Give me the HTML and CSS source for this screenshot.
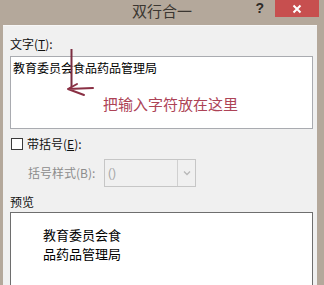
FILE: index.html
```html
<!DOCTYPE html>
<html lang="zh">
<head>
<meta charset="utf-8">
<link rel="stylesheet" href="styles.css">
</head>
<body>
<div class="window">
  <div class="titlebar">
    <span class="spacer"></span>
    <span class="title">双行合一</span>
    <div class="controls">
      <span class="help">?</span>
      <span class="close">
        <svg width="10" height="10" viewBox="0 0 10 10"><path d="M1.5 1.5 L8.5 8.5 M8.5 1.5 L1.5 8.5" stroke="#fff" stroke-width="2" fill="none"/></svg>
      </span>
    </div>
  </div>
  <div class="panel">
    <div class="label">文字(<u>T</u>):</div>
    <div class="textbox">
      <span class="content">教育委员会食品药品管理局</span>
      <svg class="arrow" width="40" height="50" viewBox="0 0 40 50">
        <path d="M10.5 0 L10.5 38" stroke="#7b2d40" stroke-width="2" fill="none"/>
        <path d="M16 35 L7 40 L23 46 M7 40 L32 39" stroke="#8a3044" stroke-width="2" fill="none" stroke-linecap="round" stroke-linejoin="round"/>
      </svg>
      <span class="note">把输入字符放在这里</span>
    </div>
    <div class="check-row">
      <span class="checkbox"></span>
      <span class="check-label">带括号(<u>E</u>):</span>
    </div>
    <div class="style-row">
      <span class="muted">括号样式(B):</span>
      <div class="select">
        <span class="sel-val">()</span>
        <span class="sel-btn">
          <svg width="8" height="6" viewBox="0 0 8 6"><path d="M1 1.5 L4 4.5 L7 1.5" stroke="#b8b8b8" stroke-width="1.3" fill="none"/></svg>
        </span>
      </div>
    </div>
    <div class="label preview-label">预览</div>
    <div class="preview">
      <div>教育委员会食</div>
      <div>品药品管理局</div>
    </div>
  </div>
</div>
</body>
</html>
```
FILE: styles.css
```css
html, body {
  margin: 0;
  padding: 0;
  width: 324px;
  height: 285px;
  overflow: hidden;
  background: #b4a89b;
}
body {
  font-family: "Noto Sans CJK SC", "Noto Sans", sans-serif;
  color: #111;
}
.window {
  display: flex;
  flex-direction: column;
  height: 285px;
}
.titlebar {
  height: 25px;
  display: grid;
  grid-template-columns: 1fr auto 1fr;
  flex: none;
}
.title {
  font-size: 15px;
  line-height: 22px;
  color: #3b3631;
}
.controls {
  justify-self: end;
  display: flex;
  align-items: flex-start;
  margin-right: 5px;
}
.help {
  font-family: "Liberation Sans", sans-serif;
  font-weight: bold;
  font-size: 14px;
  line-height: 16px;
  color: #2e2b28;
  margin-right: 11px;
  margin-top: 0px;
}
.close {
  width: 44px;
  height: 17px;
  background: #c74f4f;
  display: flex;
  align-items: center;
  justify-content: center;
}
.panel {
  flex: 1;
  margin: 0 7px 0 3px;
  padding: 11px 4px 0 7px;
  background: #f0f0f0;
  border-top: 1px solid #f7f7f7;
  box-sizing: border-box;
  overflow: hidden;
  display: flex;
  flex-direction: column;
}
.panel {
  padding-top: 10px;
}
.label {
  font-size: 12px;
  line-height: 16px;
  color: #111;
}
.textbox {
  position: relative;
  margin-top: 4px;
  height: 73px;
  box-sizing: border-box;
  border: 1px solid #a9abb0;
  background: #fff;
  padding: 3px 2px 0 2px;
  flex: none;
}
.content {
  display: block;
  font-size: 12px;
  line-height: 16px;
  color: #000;
}
.arrow {
  position: absolute;
  left: 50px;
  top: -8px;
}
.note {
  position: absolute;
  left: 92px;
  top: 39px;
  font-size: 15px;
  line-height: 15px;
  color: #ad4356;
  white-space: nowrap;
}
.check-row {
  display: flex;
  align-items: center;
  margin-top: 9px;
  height: 12px;
  flex: none;
}
.checkbox {
  width: 12px;
  height: 12px;
  box-sizing: border-box;
  border: 1px solid #3a3a3a;
  background: #fff;
  margin-left: 1px;
}
.check-label {
  font-size: 12px;
  line-height: 12px;
  margin-left: 4px;
  color: #111;
}
.style-row {
  display: flex;
  align-items: center;
  margin-top: 9px;
  height: 28px;
  flex: none;
}
.muted {
  width: 76px;
  padding-left: 18px;
  font-size: 12px;
  line-height: 16px;
  color: #8c8c8c;
  white-space: nowrap;
}
.select {
  width: 92px;
  height: 28px;
  box-sizing: border-box;
  border: 1px solid #c6c6c6;
  background: #f0f0f0;
  display: flex;
}
.sel-val {
  flex: 1;
  padding-left: 3px;
  font-size: 12px;
  line-height: 26px;
  color: #a8a8a8;
  font-family: "Liberation Sans", sans-serif;
}
.sel-btn {
  width: 17px;
  border-left: 1px solid #d0d0d0;
  display: flex;
  align-items: center;
  justify-content: center;
}
.preview-label {
  margin-top: 7px;
}
.preview {
  margin-top: 2px;
  flex: none;
  height: 100px;
  box-sizing: border-box;
  border: 1px solid #6e6e6e;
  background: #fff;
  padding: 12px 0 0 32px;
  font-size: 13px;
  line-height: 19px;
  color: #000;
}
```
